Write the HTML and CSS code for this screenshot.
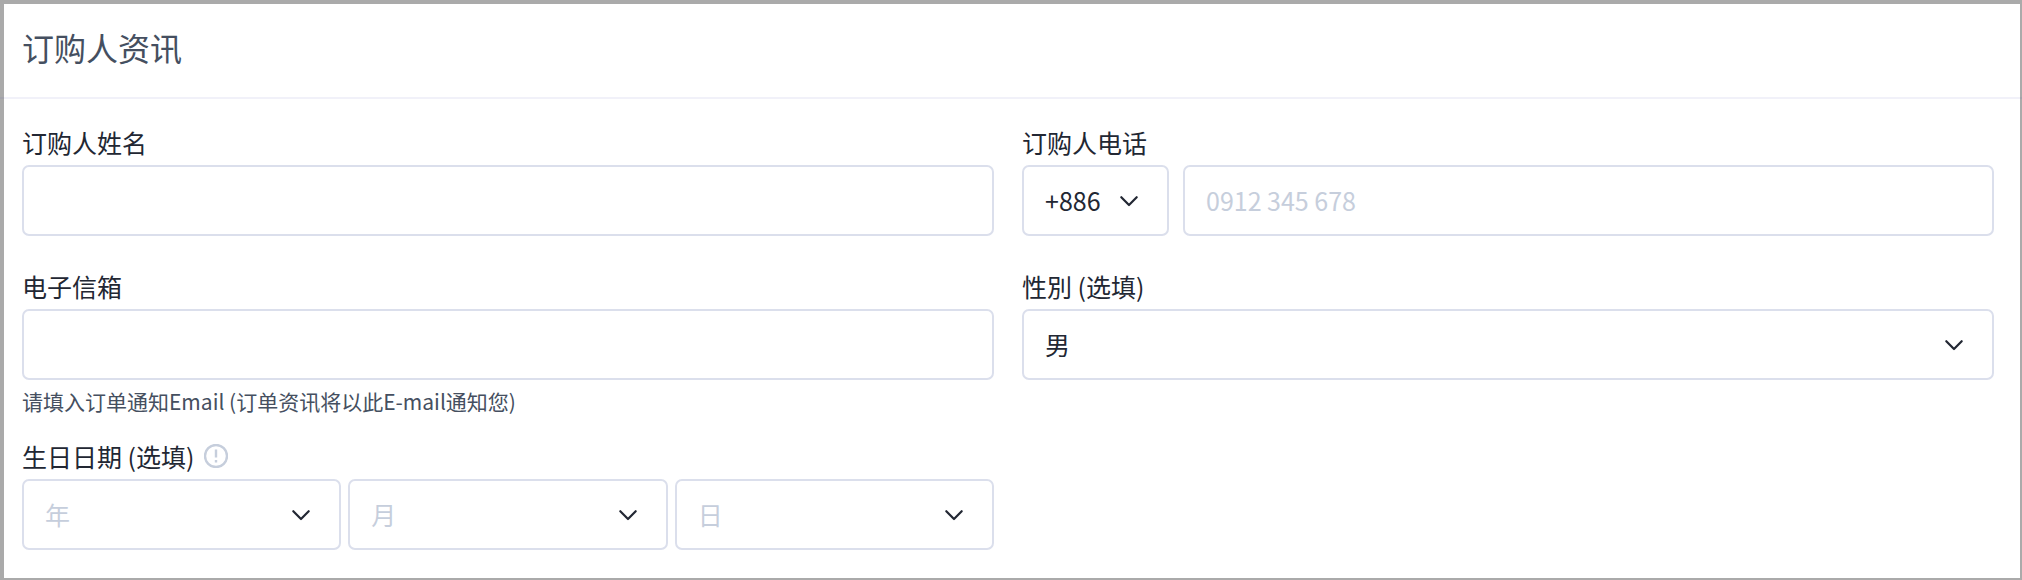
FILE: index.html
```
<!DOCTYPE html>
<html lang="zh-CN">
<head>
  <meta charset="UTF-8">
  <meta name="viewport" content="width=device-width, initial-scale=1.0">
  <title>订购人资讯</title>
  <link rel="stylesheet" href="styles.css">
</head>
<body>
  <form class="card">
    <div class="card-header">
      <h1>订购人资讯</h1>
    </div>

    <div class="card-body">
      <div class="field">
        <label for="name">订购人姓名</label>
        <input class="control" type="text" id="name">
      </div>

      <div class="field">
        <label for="phone">订购人电话</label>
        <div class="phone-group">
          <div class="select-wrapper">
            <select class="control" id="country" aria-label="国码">
              <option>+886</option>
            </select>
            <svg class="chevron" viewBox="0 0 24 24"><path d="M4.3 8.2L12 16l7.7-7.8"/></svg>
          </div>
          <input class="control" type="tel" id="phone" placeholder="0912 345 678">
        </div>
      </div>

      <div class="field has-hint">
        <label for="email">电子信箱</label>
        <input class="control" type="email" id="email">
        <p class="hint">请填入订单通知Email (订单资讯将以此E-mail通知您)</p>
      </div>

      <div class="field">
        <label for="gender">性別 (选填)</label>
        <div class="select-wrapper">
          <select class="control" id="gender">
            <option>男</option>
          </select>
          <svg class="chevron" viewBox="0 0 24 24"><path d="M4.3 8.2L12 16l7.7-7.8"/></svg>
        </div>
      </div>

      <div class="field">
        <label for="year">生日日期 (选填)
          <svg class="info" viewBox="0 0 24 24"><circle cx="12" cy="12" r="11"/><path d="M12 5.5v8M12 16v2.5"/></svg>
        </label>
        <div class="date-group">
          <div class="select-wrapper">
            <select class="control placeholder" id="year">
              <option>年</option>
            </select>
            <svg class="chevron" viewBox="0 0 24 24"><path d="M4.3 8.2L12 16l7.7-7.8"/></svg>
          </div>
          <div class="select-wrapper">
            <select class="control placeholder" id="month" aria-label="月">
              <option>月</option>
            </select>
            <svg class="chevron" viewBox="0 0 24 24"><path d="M4.3 8.2L12 16l7.7-7.8"/></svg>
          </div>
          <div class="select-wrapper">
            <select class="control placeholder" id="day" aria-label="日">
              <option>日</option>
            </select>
            <svg class="chevron" viewBox="0 0 24 24"><path d="M4.3 8.2L12 16l7.7-7.8"/></svg>
          </div>
        </div>
      </div>
    </div>
  </form>
</body>
</html>
```
FILE: styles.css
```
* {
  margin: 0;
  padding: 0;
  box-sizing: border-box;
}

body {
  font-family: "Noto Sans CJK SC", sans-serif;
  font-size: 25px;
  color: #222733;
  background-color: #fff;
}

.card {
  min-height: 100vh;
  border: solid #aaa;
  border-width: 4px 2px 2px 4px;
}

/* The divider runs over the side borders of the card */
.card-header {
  margin: 0 -2px 0 -4px;
  padding: 19px 22px 26px;
  border-bottom: 2px solid rgba(80, 80, 180, 0.08);
}

h1 {
  font-size: 32px;
  font-weight: 400;
  line-height: 48px;
  color: #454f60;
}

.card-body {
  display: grid;
  grid-template-columns: 1fr 1fr;
  column-gap: 28px;
  padding: 26px 26px 24px 18px;
}

.field {
  margin-bottom: 33px;
}

.field.has-hint {
  margin-bottom: 21px;
}

.field:last-child {
  margin-bottom: 0;
}

label {
  display: flex;
  align-items: center;
  gap: 9px;
  margin-bottom: 6px;
  line-height: 34px;
}

.control {
  display: block;
  width: 100%;
  height: 71px;
  padding: 0 21px 2px;
  font: inherit;
  color: inherit;
  background-color: #fff;
  border: 2px solid #dbdfec;
  border-radius: 7px;
  appearance: none;
}

.control::placeholder {
  color: #c6cedc;
  opacity: 1;
}

.control.placeholder {
  color: #c6cedc;
}

.hint {
  margin-top: 4px;
  font-size: 21px;
  line-height: 34px;
  color: #454f60;
}

.phone-group {
  display: grid;
  grid-template-columns: 147px 1fr;
  gap: 14px;
}

.date-group {
  display: grid;
  grid-template-columns: repeat(3, 1fr);
  gap: 7px;
}

.select-wrapper {
  position: relative;
}

.chevron {
  position: absolute;
  top: 24px;
  right: 28px;
  width: 24px;
  height: 24px;
  fill: none;
  stroke: #222733;
  stroke-width: 2.2;
  stroke-linecap: round;
  stroke-linejoin: round;
  pointer-events: none;
}

.info {
  width: 24px;
  height: 24px;
  fill: none;
  stroke: #c6cedc;
  stroke-width: 2.4;
}
```
